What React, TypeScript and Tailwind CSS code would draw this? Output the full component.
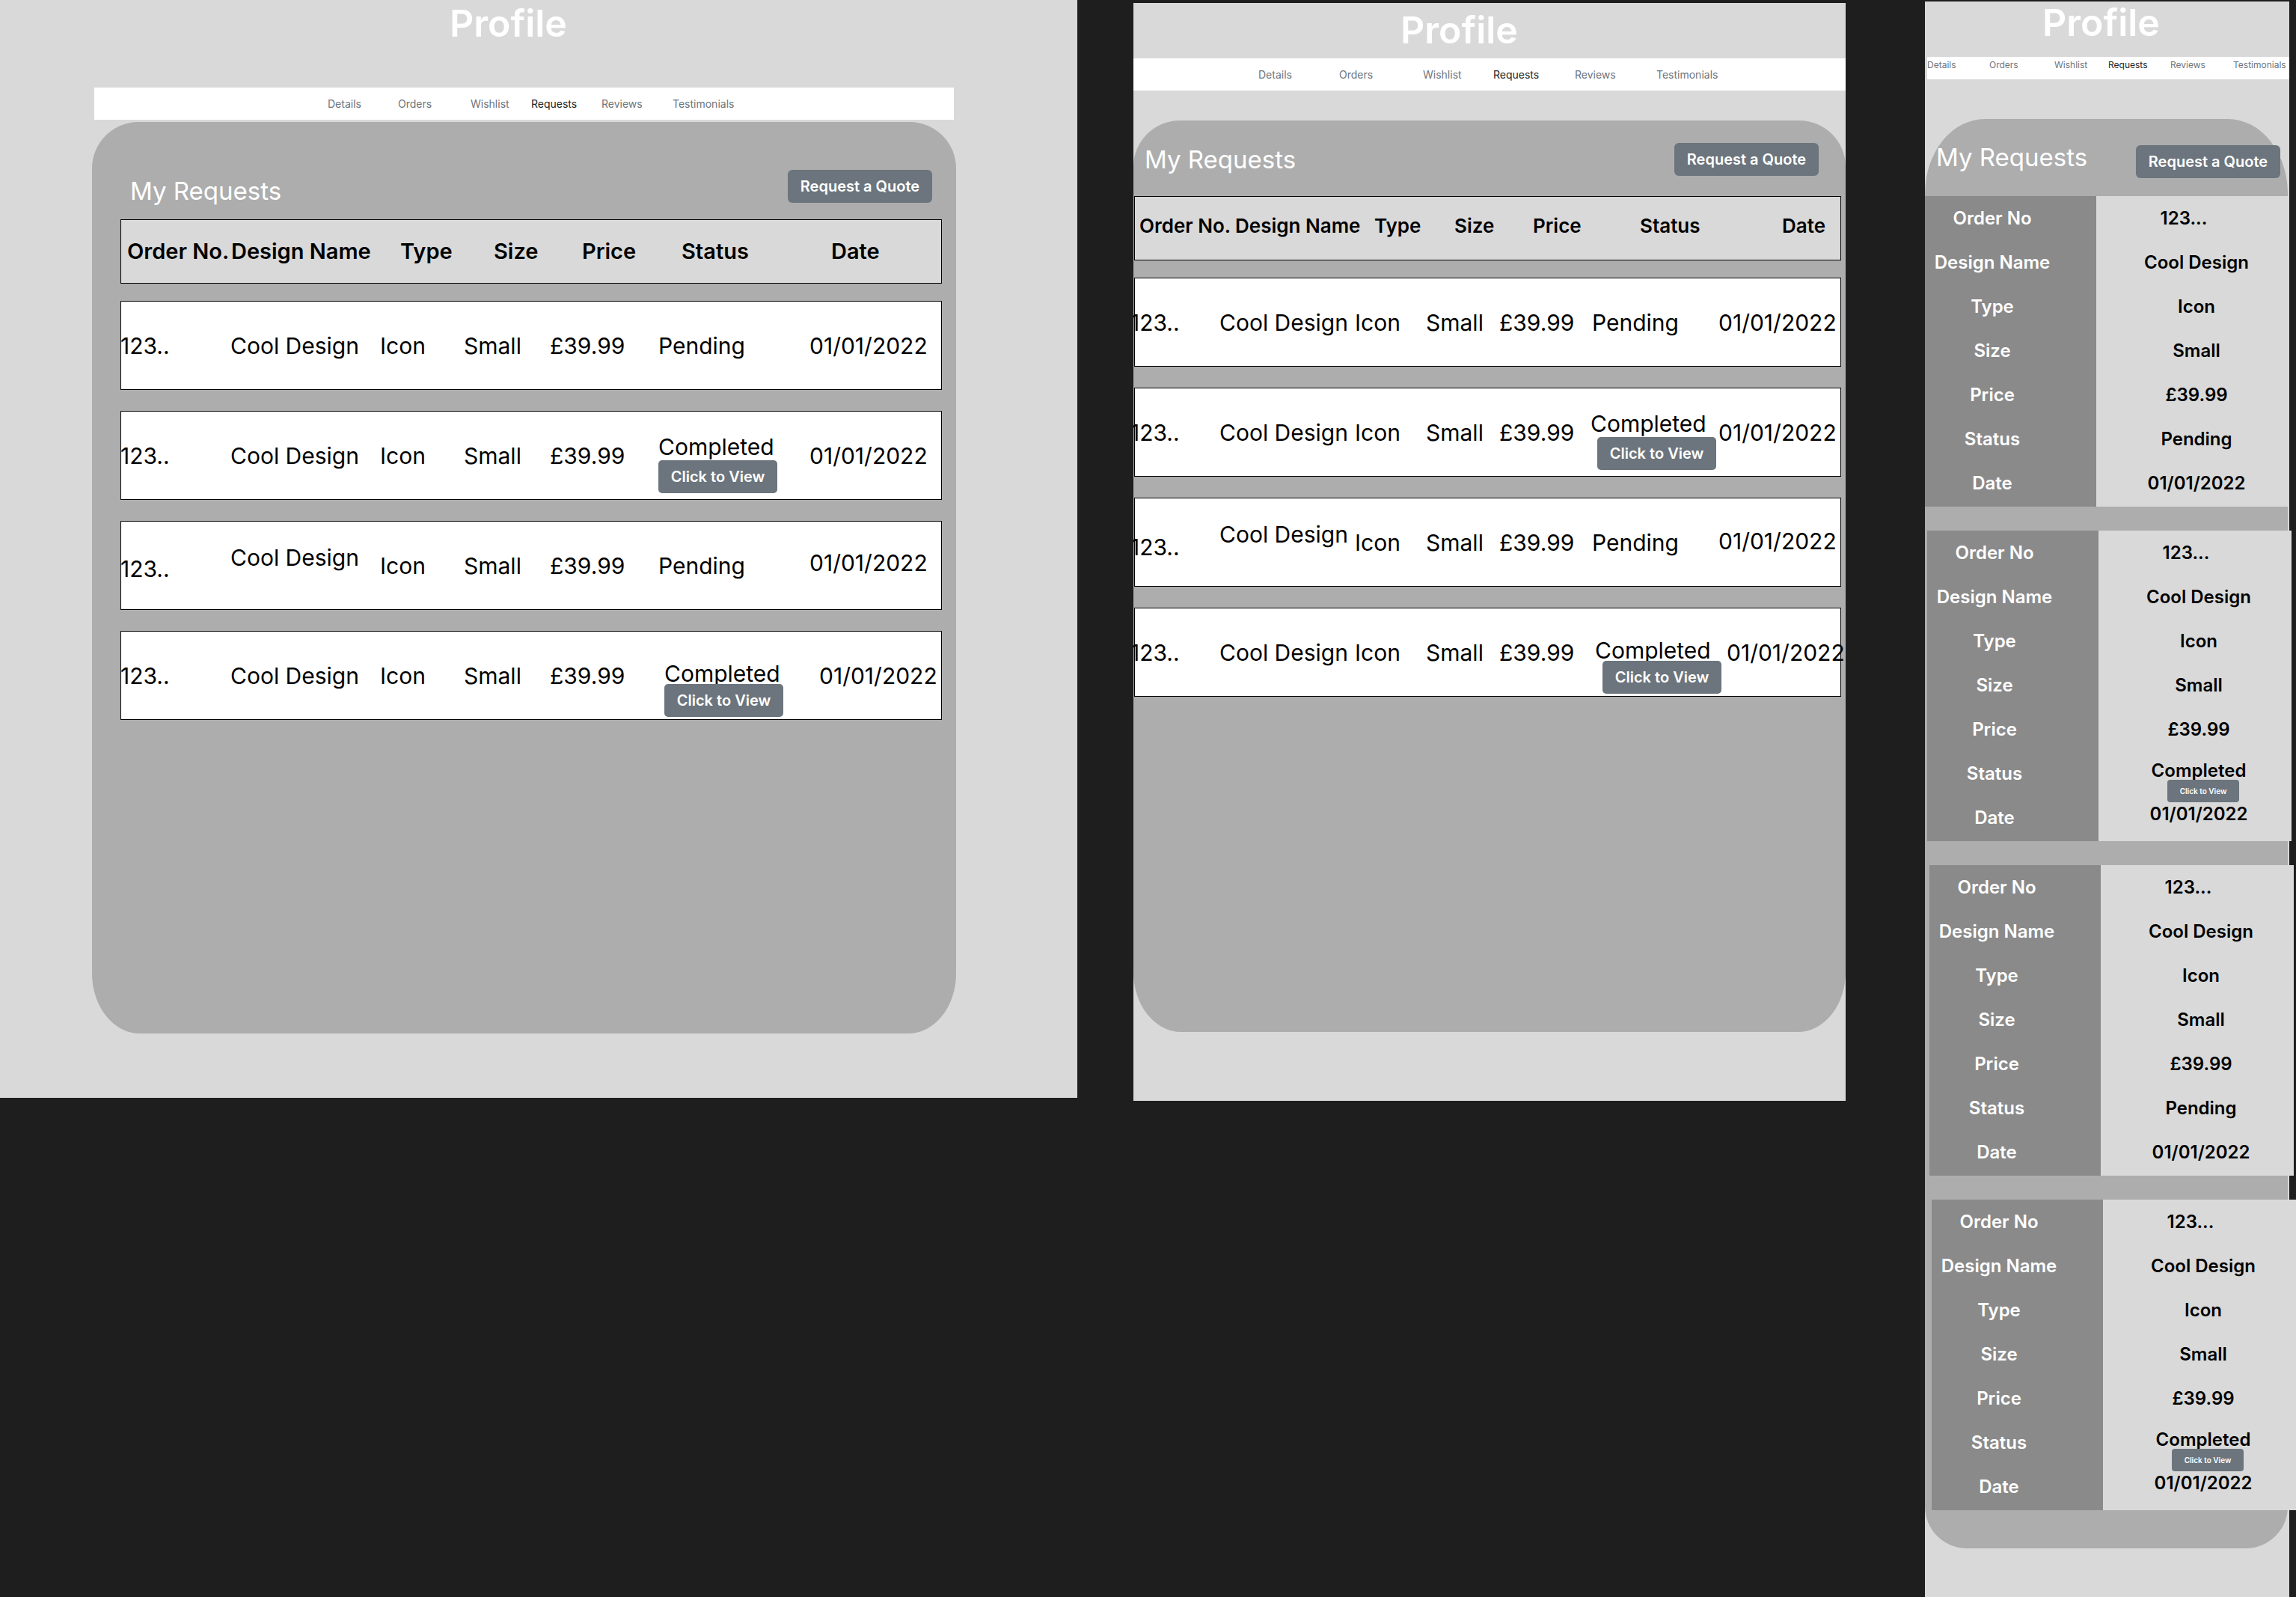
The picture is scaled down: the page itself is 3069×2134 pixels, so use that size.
import React from 'react';

const navItems = ['Details', 'Orders', 'Wishlist', 'Requests', 'Reviews', 'Testimonials'];

const Nav: React.FC<{ className: string; widths: string[]; textSize: string }> = ({ className, widths, textSize }) => (
  <nav className={`bg-white flex ${className}`}>
    {navItems.map((item, i) => (
      <div key={item} className={`shrink-0 ${widths[i] ?? ''} ${textSize} ${item === 'Requests' ? 'text-[#212529]' : 'text-[#6c757d]'}`}>
        {item}
      </div>
    ))}
  </nav>
);

const QuoteButton: React.FC<{ className?: string }> = ({ className = '' }) => (
  <button className={`w-[193px] h-[44px] shrink-0 rounded-[6px] bg-[#6c757d] text-white text-[20px] font-semibold flex items-center justify-center ${className}`}>
    Request a Quote
  </button>
);

const ViewButton: React.FC<{ className?: string }> = ({ className = '' }) => (
  <button className={`w-[159px] h-[44px] rounded-[5px] bg-[#6c757d] text-white text-[20px] leading-none font-semibold flex items-center justify-center ${className}`}>
    Click to View
  </button>
);

type RowSpec = {
  cols: string[];
  offs?: Record<number, string>;
  completed?: boolean;
  statusCls?: string;
  btnCls?: string;
};

const headers = ['Order No.', 'Design Name', 'Type', 'Size', 'Price', 'Status', 'Date'];

const TableHeader: React.FC<{ cols: string[]; className: string }> = ({ cols, className }) => (
  <div className={`h-[86px] shrink-0 border border-black bg-[#d9d9d9] flex items-center font-semibold text-black whitespace-nowrap ${className}`}>
    {headers.map((h, i) => (
      <div key={h} className={`shrink-0 ${cols[i]}`}>{h}</div>
    ))}
  </div>
);

const RequestRow: React.FC<{ spec: RowSpec }> = ({ spec }) => {
  const values = ['123..', 'Cool Design', 'Icon', 'Small', '£39.99', spec.completed ? 'Completed' : 'Pending', '01/01/2022'];
  return (
    <div className="h-[119px] shrink-0 bg-white border border-black flex items-center text-[30px] leading-[36px] text-black whitespace-nowrap">
      {values.map((v, i) =>
        i === 5 && spec.completed ? (
          <div key={i} className={`shrink-0 self-start flex flex-col items-start ${spec.cols[i]} ${spec.statusCls}`}>
            <span className="leading-[32px]">{v}</span>
            <ViewButton className={spec.btnCls} />
          </div>
        ) : (
          <div key={i} className={`shrink-0 ${spec.cols[i]} ${spec.offs?.[i] ?? ''}`}>{v}</div>
        )
      )}
    </div>
  );
};

const leftRows: RowSpec[] = [
  { cols: ['w-[147px] -ml-[1px]', 'w-[200px]', 'w-[112px]', 'w-[115px]', 'w-[145px]', 'w-[202px]', 'flex-1'] },
  {
    cols: ['w-[147px] -ml-[1px]', 'w-[200px]', 'w-[112px]', 'w-[115px]', 'w-[145px]', 'w-[202px]', 'flex-1'],
    completed: true,
    statusCls: 'mt-[31px]',
    btnCls: 'mt-[2px]',
  },
  {
    cols: ['w-[147px] -ml-[1px]', 'w-[200px]', 'w-[112px]', 'w-[115px]', 'w-[145px]', 'w-[202px]', 'flex-1'],
    offs: { 0: 'self-start mt-[45px]', 1: 'self-start mt-[30px]', 6: 'self-start mt-[37px]' },
  },
  {
    cols: ['w-[147px] -ml-[1px]', 'w-[200px]', 'w-[112px]', 'w-[115px]', 'w-[153px]', 'w-[207px]', 'flex-1'],
    completed: true,
    statusCls: 'mt-[40px]',
    btnCls: '-mt-[2px]',
  },
];

const midRows: RowSpec[] = [
  { cols: ['w-[119px] -ml-[6px]', 'w-[181px]', 'w-[95px]', 'w-[98px]', 'w-[124px]', 'w-[169px]', 'flex-1'] },
  {
    cols: ['w-[119px] -ml-[6px]', 'w-[181px]', 'w-[95px]', 'w-[98px]', 'w-[122px]', 'w-[171px]', 'flex-1'],
    completed: true,
    statusCls: 'mt-[31px]',
    btnCls: 'mt-[2px] ml-[9px]',
  },
  {
    cols: ['w-[119px] -ml-[6px]', 'w-[181px]', 'w-[95px]', 'w-[98px]', 'w-[124px]', 'w-[169px]', 'flex-1'],
    offs: { 0: 'self-start mt-[47px]', 1: 'self-start mt-[30px]', 6: 'self-start mt-[39px]' },
  },
  {
    cols: ['w-[119px] -ml-[6px]', 'w-[181px]', 'w-[95px]', 'w-[98px]', 'w-[128px]', 'w-[176px]', 'flex-1'],
    completed: true,
    statusCls: 'mt-[40px]',
    btnCls: '-mt-[2px] ml-[10px]',
  },
];

const labels = ['Order No', 'Design Name', 'Type', 'Size', 'Price', 'Status', 'Date'];

const MobileCard: React.FC<{ completed: boolean; shift: string }> = ({ completed, shift }) => {
  const values = ['123...', 'Cool Design', 'Icon', 'Small', '£39.99', completed ? 'Completed' : 'Pending', '01/01/2022'];
  return (
    <div className={`w-[487px] h-[415px] shrink-0 flex text-[24px] font-semibold whitespace-nowrap ${shift}`}>
      <div className="w-[229px] shrink-0 bg-[#8a8a8a] flex flex-col text-white">
        {labels.map((l) => (
          <div key={l} className="h-[59px] flex items-center justify-center pr-[49px]">{l}</div>
        ))}
      </div>
      <div className="relative flex-1 bg-[#d9d9d9] flex flex-col text-black">
        {values.map((v, i) => (
          <div
            key={i}
            className={`h-[59px] flex items-center justify-center pl-[10px] ${i === 0 ? '-translate-x-[17px]' : ''} ${
              completed && i === 5 ? '-translate-y-[4px]' : ''
            } ${completed && i === 6 ? '-translate-y-[5px]' : ''}`}
          >
            {v}
          </div>
        ))}
        {completed && (
          <button className="absolute left-[92px] top-[333px] w-[96px] h-[30px] rounded-[4px] bg-[#6c757d] text-white text-[10px] font-semibold flex items-center justify-center">
            Click to View
          </button>
        )}
      </div>
    </div>
  );
};

const App: React.FC = () => {
  return (
    <div className="w-[3069px] h-[2134px] bg-[#1e1e1e] overflow-hidden flex items-start font-['Inter',_sans-serif]">
      {/* desktop */}
      <div className="w-[1440px] h-[1467px] shrink-0 bg-[#d9d9d9] pl-[123px] flex flex-col items-start overflow-hidden">
        <h1 className="mt-[6px] ml-[478px] text-[50px] leading-[50px] font-semibold text-white">Profile</h1>
        <Nav
          className="mt-[61px] ml-[3px] w-[1149px] h-[43px] items-center pl-[312px]"
          widths={['w-[94px]', 'w-[97px]', 'w-[81px]', 'w-[94px]', 'w-[95px]', '']}
          textSize="text-[14px]"
        />
        <section className="mt-[3px] w-[1155px] h-[1218px] shrink-0 bg-[#adadad] rounded-t-[62px] rounded-b-[64px_80px] pl-[38px] pr-[19px] flex flex-col">
          <div className="flex justify-between items-start pt-[64px] px-[13px]">
            <h2 className="mt-[6px] text-[33px] leading-[44px] text-white">My Requests</h2>
            <QuoteButton />
          </div>
          <TableHeader
            className="mt-[16px] text-[29px]"
            cols={['ml-[8px] w-[139px]', 'w-[226px]', 'w-[125px]', 'w-[118px]', 'w-[133px]', 'w-[200px]', 'flex-1']}
          />
          <div className="mt-[23px] flex flex-col gap-[28px]">
            {leftRows.map((r, i) => (
              <RequestRow key={i} spec={r} />
            ))}
          </div>
        </section>
      </div>

      {/* tablet */}
      <div className="ml-[75px] mt-[4px] w-[952px] h-[1467px] shrink-0 bg-[#d9d9d9] flex flex-col overflow-hidden">
        <h1 className="mt-[11px] ml-[357px] text-[50px] leading-[50px] font-semibold text-white">Profile</h1>
        <Nav
          className="mt-[13px] w-full h-[43px] items-center pl-[167px]"
          widths={['w-[108px]', 'w-[112px]', 'w-[94px]', 'w-[109px]', 'w-[109px]', '']}
          textSize="text-[14px]"
        />
        <section className="mt-[40px] w-full h-[1218px] shrink-0 bg-[#adadad] rounded-t-[62px] rounded-b-[64px_80px] pl-[1px] pr-[6px] flex flex-col">
          <div className="flex justify-between items-start pt-[30px]">
            <h2 className="ml-[14px] text-[33px] leading-[44px] text-white">My Requests</h2>
            <QuoteButton className="mr-[30px]" />
          </div>
          <TableHeader
            className="mt-[27px] pb-[7px] text-[26px]"
            cols={['ml-[6px] w-[128px]', 'w-[186px]', 'w-[107px]', 'w-[105px]', 'w-[143px]', 'w-[190px]', 'flex-1']}
          />
          <div className="mt-[23px] flex flex-col gap-[28px]">
            {midRows.map((r, i) => (
              <RequestRow key={i} spec={r} />
            ))}
          </div>
        </section>
      </div>

      {/* mobile */}
      <div className="ml-[106px] mt-[2px] w-[487px] h-[2132px] shrink-0 bg-[#d9d9d9] flex flex-col">
        <h1 className="mt-[3px] ml-[157px] text-[50px] leading-[50px] font-semibold text-white">Profile</h1>
        <Nav
          className="mt-[21px] ml-[3px] w-[484px] h-[30px] items-start pt-[3px] leading-[16px]"
          widths={['w-[83px]', 'w-[87px]', 'w-[72px]', 'w-[83px]', 'w-[84px]', '']}
          textSize="text-[12px]"
        />
        <section className="mt-[53px] w-[485px] h-[1910px] shrink-0 bg-[#adadad] rounded-t-[80px_100px] rounded-b-[56px] flex flex-col">
          <div className="h-[103px] shrink-0 flex justify-between items-start">
            <h2 className="ml-[15px] mt-[29px] text-[33px] leading-[44px] text-white">My Requests</h2>
            <QuoteButton className="mt-[35px] mr-[10px]" />
          </div>
          <div className="flex flex-col gap-[32px]">
            <MobileCard completed={false} shift="ml-0" />
            <MobileCard completed={true} shift="ml-[3px]" />
            <MobileCard completed={false} shift="ml-[6px]" />
            <MobileCard completed={true} shift="ml-[9px]" />
          </div>
        </section>
      </div>
    </div>
  );
};

export default App;
